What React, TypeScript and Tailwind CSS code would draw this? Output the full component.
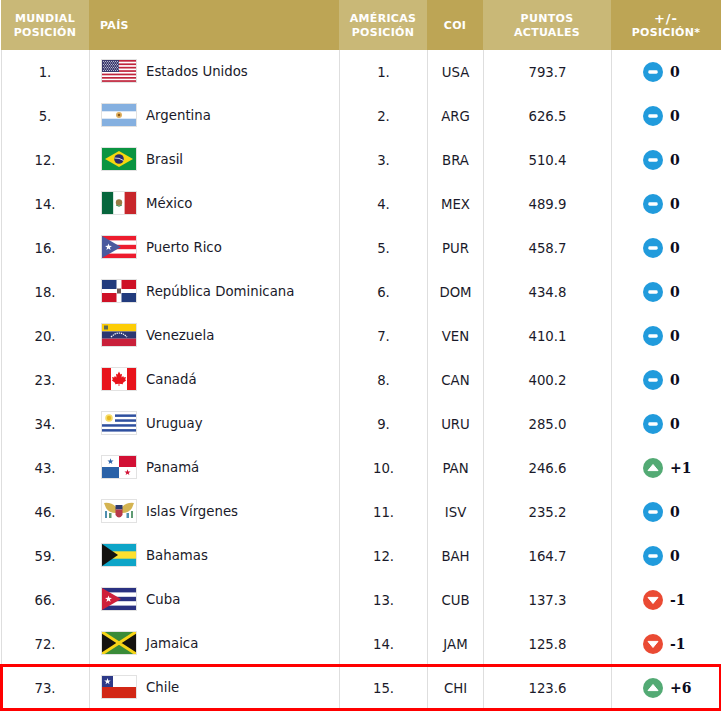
import React from 'react';

type Trend = 'same' | 'up' | 'down';

interface Row {
    world: string;
    name: string;
    pos: string;
    coi: string;
    points: string;
    trend: Trend;
    change: string;
}

const rows: Row[] = [
    { world: '1.', name: 'Estados Unidos', pos: '1.', coi: 'USA', points: '793.7', trend: 'same', change: '0' },
    { world: '5.', name: 'Argentina', pos: '2.', coi: 'ARG', points: '626.5', trend: 'same', change: '0' },
    { world: '12.', name: 'Brasil', pos: '3.', coi: 'BRA', points: '510.4', trend: 'same', change: '0' },
    { world: '14.', name: 'México', pos: '4.', coi: 'MEX', points: '489.9', trend: 'same', change: '0' },
    { world: '16.', name: 'Puerto Rico', pos: '5.', coi: 'PUR', points: '458.7', trend: 'same', change: '0' },
    { world: '18.', name: 'República Dominicana', pos: '6.', coi: 'DOM', points: '434.8', trend: 'same', change: '0' },
    { world: '20.', name: 'Venezuela', pos: '7.', coi: 'VEN', points: '410.1', trend: 'same', change: '0' },
    { world: '23.', name: 'Canadá', pos: '8.', coi: 'CAN', points: '400.2', trend: 'same', change: '0' },
    { world: '34.', name: 'Uruguay', pos: '9.', coi: 'URU', points: '285.0', trend: 'same', change: '0' },
    { world: '43.', name: 'Panamá', pos: '10.', coi: 'PAN', points: '246.6', trend: 'up', change: '+1' },
    { world: '46.', name: 'Islas Vírgenes', pos: '11.', coi: 'ISV', points: '235.2', trend: 'same', change: '0' },
    { world: '59.', name: 'Bahamas', pos: '12.', coi: 'BAH', points: '164.7', trend: 'same', change: '0' },
    { world: '66.', name: 'Cuba', pos: '13.', coi: 'CUB', points: '137.3', trend: 'down', change: '-1' },
    { world: '72.', name: 'Jamaica', pos: '14.', coi: 'JAM', points: '125.8', trend: 'down', change: '-1' },
    { world: '73.', name: 'Chile', pos: '15.', coi: 'CHI', points: '123.6', trend: 'up', change: '+6' },
];

const star = (cx: number, cy: number, r: number) => {
    const pts: string[] = [];
    for (let i = 0; i < 10; i++) {
        const rad = i % 2 === 0 ? r : r * 0.4;
        const a = (Math.PI / 5) * i - Math.PI / 2;
        pts.push(`${cx + rad * Math.cos(a)},${cy + rad * Math.sin(a)}`);
    }
    return pts.join(' ');
};

const FlagArt: React.FC<{ coi: string }> = ({ coi }) => {
    switch (coi) {
        case 'USA':
            return (
                <>
                    <rect width="34" height="22" fill="#fff" />
                    {[0, 3.4, 6.8, 10.2, 13.6, 17, 20.2].map((y) => (
                        <rect key={y} y={y} width="34" height="1.7" fill="#c0253c" />
                    ))}
                    <rect width="17" height="12" fill="#3c3b6e" />
                    {[1, 2.5, 4, 5.5, 7, 8.5, 10].map((y, r) =>
                        [1, 3, 5, 7, 9, 11, 13, 15].map((x) => (
                            <rect key={`${x}-${y}`} x={x + (r % 2)} y={y} width="0.9" height="0.9" fill="#d8d9e8" />
                        ))
                    )}
                </>
            );
        case 'ARG':
            return (
                <>
                    <rect width="34" height="22" fill="#85b0e0" />
                    <rect y="7.3" width="34" height="7.4" fill="#fff" />
                    <circle cx="17" cy="11" r="3" fill="#e0b060" />
                    <circle cx="17" cy="11" r="1.3" fill="#8a5a1c" />
                </>
            );
        case 'BRA':
            return (
                <>
                    <rect width="34" height="22" fill="#0a9441" />
                    <polygon points="17,3 31,11 17,19 3,11" fill="#f6d70f" />
                    <circle cx="17" cy="11" r="4.8" fill="#2b2a6b" />
                    <path d="M12.5 10 Q17 9.5 21.5 12.5" stroke="#fff" strokeWidth="0.8" fill="none" />
                </>
            );
        case 'MEX':
            return (
                <>
                    <rect width="11.4" height="22" fill="#07663d" />
                    <rect x="11.4" width="11.2" height="22" fill="#fff" />
                    <rect x="22.6" width="11.4" height="22" fill="#c7262b" />
                    <circle cx="17" cy="10.5" r="3.2" fill="#9b7b45" />
                    <path d="M14 13 Q17 15.5 20 13" stroke="#3f8a4c" strokeWidth="1" fill="none" />
                </>
            );
        case 'PUR':
            return (
                <>
                    <rect width="34" height="22" fill="#ed1c2e" />
                    <rect y="4.4" width="34" height="4.4" fill="#fff" />
                    <rect y="13.2" width="34" height="4.4" fill="#fff" />
                    <polygon points="0,0 19,11 0,22" fill="#4a5a9e" />
                    <polygon points={star(6.5, 11, 3.6)} fill="#fff" />
                </>
            );
        case 'DOM':
            return (
                <>
                    <rect width="34" height="22" fill="#fff" />
                    <rect width="14.5" height="9" fill="#223b7d" />
                    <rect x="19.5" width="14.5" height="9" fill="#ce1126" />
                    <rect y="13" width="14.5" height="9" fill="#ce1126" />
                    <rect x="19.5" y="13" width="14.5" height="9" fill="#223b7d" />
                    <rect x="15" y="8.5" width="4" height="5" fill="#6f5a56" />
                </>
            );
        case 'VEN':
            return (
                <>
                    <rect width="34" height="7.4" fill="#fdcd06" />
                    <rect y="7.4" width="34" height="7.3" fill="#2c3771" />
                    <rect y="14.7" width="34" height="7.3" fill="#c9203a" />
                    <rect x="2" y="1.5" width="4" height="4" fill="#5f6a52" />
                    <path d="M9 13 Q17 5 25 13" stroke="#fff" strokeWidth="1.2" strokeDasharray="1.4 0.8" fill="none" />
                </>
            );
        case 'CAN':
            return (
                <>
                    <rect width="34" height="22" fill="#fff" />
                    <rect width="9" height="22" fill="#e8131b" />
                    <rect x="25" width="9" height="22" fill="#e8131b" />
                    <polygon
                        points="17,3.5 18.5,6.5 20,5.8 19.5,9.5 21.2,8 21.8,9.5 24,9 23.2,11.5 24.3,12.2 20.8,15 21,16.3 17.4,15.8 17.4,18 16.6,18 16.6,15.8 13,16.3 13.2,15 9.7,12.2 10.8,11.5 10,9 12.2,9.5 12.8,8 14.5,9.5 14,5.8 15.5,6.5"
                        fill="#e8131b"
                    />
                </>
            );
        case 'URU':
            return (
                <>
                    <rect width="34" height="22" fill="#fff" />
                    {[2.4, 7.3, 12.2, 17.1].map((y, i) => (
                        <rect key={y} x={i < 2 ? 13 : 0} y={y} width={i < 2 ? 21 : 34} height="2.5" fill="#2f509f" />
                    ))}
                    <circle cx="7" cy="6" r="3.8" fill="#f6dd6a" />
                    <circle cx="7" cy="6" r="2.2" fill="#e8b923" />
                </>
            );
        case 'PAN':
            return (
                <>
                    <rect width="34" height="22" fill="#fff" />
                    <rect x="17" width="17" height="11" fill="#d21034" />
                    <rect y="11" width="17" height="11" fill="#2a62a8" />
                    <polygon points={star(8.5, 5.5, 3.2)} fill="#2a62a8" />
                    <polygon points={star(25.5, 16.5, 3.2)} fill="#d21034" />
                </>
            );
        case 'ISV':
            return (
                <>
                    <rect width="34" height="22" fill="#fff" />
                    <path d="M2 3 Q9 2 14 7 L14 13 Q7 13 4 8 Z" fill="#d4b452" />
                    <path d="M32 3 Q25 2 20 7 L20 13 Q27 13 30 8 Z" fill="#d4b452" />
                    <rect x="13.5" y="5" width="7" height="4.5" fill="#2c3a70" />
                    <path d="M13.5 9.5 H20.5 V15 Q17 20 13.5 15 Z" fill="#b8394a" />
                    <rect x="3" y="11" width="2" height="7" fill="#4f8fb0" />
                    <rect x="7" y="13" width="2.5" height="5" fill="#5f9b73" />
                    <rect x="24.5" y="13" width="2.5" height="5" fill="#4f8fb0" />
                    <rect x="29" y="11" width="2" height="7" fill="#5f9b73" />
                </>
            );
        case 'BAH':
            return (
                <>
                    <rect width="34" height="22" fill="#0ea5c8" />
                    <rect y="7.3" width="34" height="7.4" fill="#fde02f" />
                    <polygon points="0,0 16,11 0,22" fill="#14120f" />
                </>
            );
        case 'CUB':
            return (
                <>
                    <rect width="34" height="22" fill="#fff" />
                    <rect width="34" height="4.4" fill="#2a3181" />
                    <rect y="8.8" width="34" height="4.4" fill="#2a3181" />
                    <rect y="17.6" width="34" height="4.4" fill="#2a3181" />
                    <polygon points="0,0 19,11 0,22" fill="#cf1f3a" />
                    <polygon points={star(6.5, 11, 3.6)} fill="#fff" />
                </>
            );
        case 'JAM':
            return (
                <>
                    <rect width="34" height="22" fill="#3a8b38" />
                    <polygon points="0,0 17,11 0,22" fill="#14120f" />
                    <polygon points="34,0 17,11 34,22" fill="#14120f" />
                    <path d="M0 0 L34 22 M34 0 L0 22" stroke="#f7d417" strokeWidth="3" />
                </>
            );
        default:
            return (
                <>
                    <rect width="34" height="22" fill="#fff" />
                    <rect y="11" width="34" height="11" fill="#d22715" />
                    <rect width="11" height="11" fill="#2d3a88" />
                    <polygon points={star(5.5, 5.5, 3.4)} fill="#fff" />
                </>
            );
    }
};

const Flag: React.FC<{ coi: string }> = ({ coi }) => (
    <span className="block w-[36px] h-[24px] mb-[2px] border border-[#e2e2e2] shrink-0">
        <svg viewBox="0 0 34 22" width="34" height="22" className="block">
            <FlagArt coi={coi} />
        </svg>
    </span>
);

const TrendIcon: React.FC<{ trend: Trend }> = ({ trend }) => {
    const fill = trend === 'same' ? '#219bdc' : trend === 'up' ? '#53aa74' : '#ea4a33';
    return (
        <svg viewBox="0 0 20 20" width="20" height="20" className="block shrink-0">
            <circle cx="10" cy="10" r="10" fill={fill} />
            {trend === 'same' && <rect x="5.3" y="8.3" width="9.4" height="3.4" rx="1.4" fill="#fff" />}
            {trend === 'up' && <path d="M10 6.5 L15 12.6 H5 Z" fill="#fff" stroke="#fff" strokeWidth="1" strokeLinejoin="round" />}
            {trend === 'down' && <path d="M10 13.5 L15 7.4 H5 Z" fill="#fff" stroke="#fff" strokeWidth="1" strokeLinejoin="round" />}
        </svg>
    );
};

const cols = 'grid grid-cols-[89px_250px_88px_56px_128px_110px]';
const headCell = 'flex items-center justify-center text-center text-white font-bold pt-[2px] text-[11px] leading-[14px] tracking-[0.3px]';
const bodyCell = 'flex items-center justify-center border-l border-[#dedede] h-[44px]';

const App: React.FC = () => {
    return (
        <div className="relative w-[721px] h-[712px] bg-white overflow-hidden text-[#1a1a2a] text-[13.3px] font-['DejaVu_Sans',sans-serif]">
            <div className={`${cols} h-[50px]`}>
                <div className={`${headCell} bg-[#c9b877] ml-[1px]`}>MUNDIAL<br />POSICIÓN</div>
                <div className={`${headCell} bg-[#bda555] !justify-start pl-[11px]`}>PAÍS</div>
                <div className={`${headCell} bg-[#c9b877]`}>AMÉRICAS<br />POSICIÓN</div>
                <div className={`${headCell} bg-[#bda555]`}>COI</div>
                <div className={`${headCell} bg-[#c9b877]`}>PUNTOS<br />ACTUALES</div>
                <div className={`${headCell} bg-[#bda555]`}>
                    <div>
                        <div className="text-[13px] leading-[14px] tracking-[1px]">+/-</div>
                        <div>POSICIÓN*</div>
                    </div>
                </div>
            </div>
            {rows.map((row) => (
                <div key={row.coi} className={cols}>
                    <div className={`${bodyCell} ml-[1px] pr-[1px] pt-[1px]`}>{row.world}</div>
                    <div className={`${bodyCell} !justify-start pl-[11px] gap-[9px]`}>
                        <Flag coi={row.coi} />
                        <span className="pb-[1px]">{row.name}</span>
                    </div>
                    <div className={`${bodyCell} pt-[1px]`}>{row.pos}</div>
                    <div className={`${bodyCell} pt-[1px]`}>{row.coi}</div>
                    <div className={`${bodyCell} pt-[1px]`}>{row.points}</div>
                    <div className={`${bodyCell} !justify-start pl-[31px] gap-[7px]`}>
                        <TrendIcon trend={row.trend} />
                        <span className="font-bold text-[14px] pt-[1px] text-[#0c0c1c] font-['DejaVu_Serif',serif]">{row.change}</span>
                    </div>
                </div>
            ))}
            <div className="absolute left-0 right-0 top-[664px] h-[47px] border-[3px] border-r-2 border-[#ff0000] pointer-events-none" />
        </div>
    );
};

export default App;
